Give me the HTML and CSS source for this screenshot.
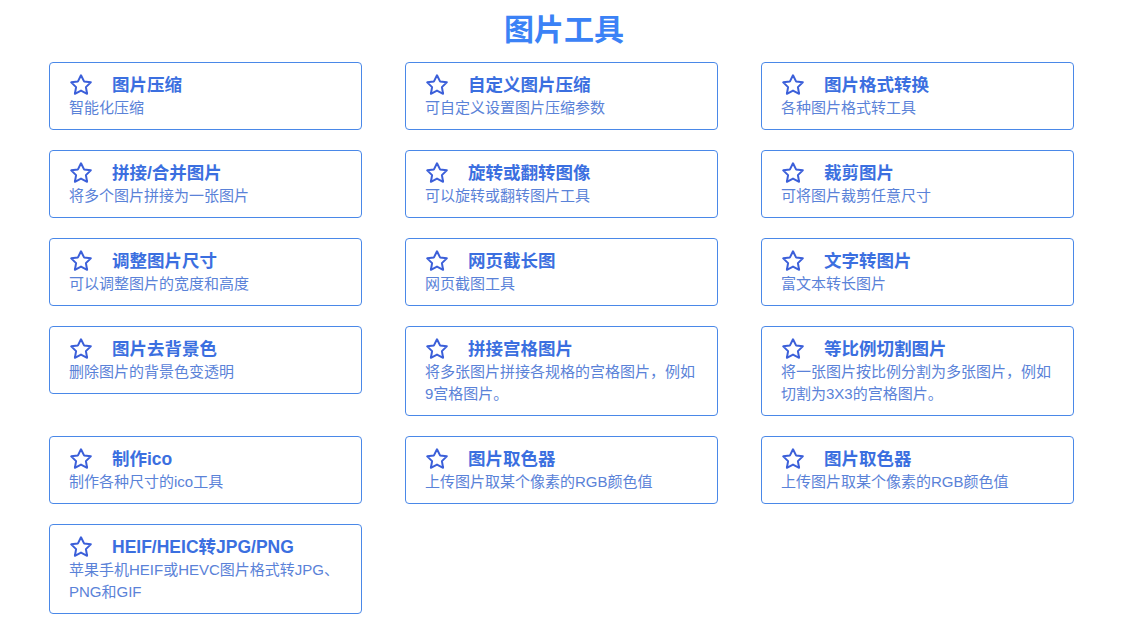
FILE: index.html
```html
<!DOCTYPE html>
<html lang="zh">
<head>
<meta charset="utf-8">
<title>图片工具</title>
<link rel="stylesheet" href="styles.css">
</head>
<body>
<h1 class="page-title">图片工具</h1>
<div class="grid">
  <div class="card"><div class="head"><svg class="star" viewBox="0 0 24 24"><path d="M12 2.3l3.05 6.1 6.75.95-4.9 4.75 1.2 6.7L12 17.6l-6.1 3.2 1.2-6.7-4.9-4.75 6.75-.95z"/></svg><span class="name">图片压缩</span></div><p class="desc">智能化压缩</p></div>
  <div class="card"><div class="head"><svg class="star" viewBox="0 0 24 24"><path d="M12 2.3l3.05 6.1 6.75.95-4.9 4.75 1.2 6.7L12 17.6l-6.1 3.2 1.2-6.7-4.9-4.75 6.75-.95z"/></svg><span class="name">自定义图片压缩</span></div><p class="desc">可自定义设置图片压缩参数</p></div>
  <div class="card"><div class="head"><svg class="star" viewBox="0 0 24 24"><path d="M12 2.3l3.05 6.1 6.75.95-4.9 4.75 1.2 6.7L12 17.6l-6.1 3.2 1.2-6.7-4.9-4.75 6.75-.95z"/></svg><span class="name">图片格式转换</span></div><p class="desc">各种图片格式转工具</p></div>

  <div class="card"><div class="head"><svg class="star" viewBox="0 0 24 24"><path d="M12 2.3l3.05 6.1 6.75.95-4.9 4.75 1.2 6.7L12 17.6l-6.1 3.2 1.2-6.7-4.9-4.75 6.75-.95z"/></svg><span class="name">拼接/合并图片</span></div><p class="desc">将多个图片拼接为一张图片</p></div>
  <div class="card"><div class="head"><svg class="star" viewBox="0 0 24 24"><path d="M12 2.3l3.05 6.1 6.75.95-4.9 4.75 1.2 6.7L12 17.6l-6.1 3.2 1.2-6.7-4.9-4.75 6.75-.95z"/></svg><span class="name">旋转或翻转图像</span></div><p class="desc">可以旋转或翻转图片工具</p></div>
  <div class="card"><div class="head"><svg class="star" viewBox="0 0 24 24"><path d="M12 2.3l3.05 6.1 6.75.95-4.9 4.75 1.2 6.7L12 17.6l-6.1 3.2 1.2-6.7-4.9-4.75 6.75-.95z"/></svg><span class="name">裁剪图片</span></div><p class="desc">可将图片裁剪任意尺寸</p></div>

  <div class="card"><div class="head"><svg class="star" viewBox="0 0 24 24"><path d="M12 2.3l3.05 6.1 6.75.95-4.9 4.75 1.2 6.7L12 17.6l-6.1 3.2 1.2-6.7-4.9-4.75 6.75-.95z"/></svg><span class="name">调整图片尺寸</span></div><p class="desc">可以调整图片的宽度和高度</p></div>
  <div class="card"><div class="head"><svg class="star" viewBox="0 0 24 24"><path d="M12 2.3l3.05 6.1 6.75.95-4.9 4.75 1.2 6.7L12 17.6l-6.1 3.2 1.2-6.7-4.9-4.75 6.75-.95z"/></svg><span class="name">网页截长图</span></div><p class="desc">网页截图工具</p></div>
  <div class="card"><div class="head"><svg class="star" viewBox="0 0 24 24"><path d="M12 2.3l3.05 6.1 6.75.95-4.9 4.75 1.2 6.7L12 17.6l-6.1 3.2 1.2-6.7-4.9-4.75 6.75-.95z"/></svg><span class="name">文字转图片</span></div><p class="desc">富文本转长图片</p></div>

  <div class="card"><div class="head"><svg class="star" viewBox="0 0 24 24"><path d="M12 2.3l3.05 6.1 6.75.95-4.9 4.75 1.2 6.7L12 17.6l-6.1 3.2 1.2-6.7-4.9-4.75 6.75-.95z"/></svg><span class="name">图片去背景色</span></div><p class="desc">删除图片的背景色变透明</p></div>
  <div class="card"><div class="head"><svg class="star" viewBox="0 0 24 24"><path d="M12 2.3l3.05 6.1 6.75.95-4.9 4.75 1.2 6.7L12 17.6l-6.1 3.2 1.2-6.7-4.9-4.75 6.75-.95z"/></svg><span class="name">拼接宫格图片</span></div><p class="desc">将多张图片拼接各规格的宫格图片，例如9宫格图片。</p></div>
  <div class="card"><div class="head"><svg class="star" viewBox="0 0 24 24"><path d="M12 2.3l3.05 6.1 6.75.95-4.9 4.75 1.2 6.7L12 17.6l-6.1 3.2 1.2-6.7-4.9-4.75 6.75-.95z"/></svg><span class="name">等比例切割图片</span></div><p class="desc">将一张图片按比例分割为多张图片，例如切割为3X3的宫格图片。</p></div>

  <div class="card"><div class="head"><svg class="star" viewBox="0 0 24 24"><path d="M12 2.3l3.05 6.1 6.75.95-4.9 4.75 1.2 6.7L12 17.6l-6.1 3.2 1.2-6.7-4.9-4.75 6.75-.95z"/></svg><span class="name">制作ico</span></div><p class="desc">制作各种尺寸的ico工具</p></div>
  <div class="card"><div class="head"><svg class="star" viewBox="0 0 24 24"><path d="M12 2.3l3.05 6.1 6.75.95-4.9 4.75 1.2 6.7L12 17.6l-6.1 3.2 1.2-6.7-4.9-4.75 6.75-.95z"/></svg><span class="name">图片取色器</span></div><p class="desc">上传图片取某个像素的RGB颜色值</p></div>
  <div class="card"><div class="head"><svg class="star" viewBox="0 0 24 24"><path d="M12 2.3l3.05 6.1 6.75.95-4.9 4.75 1.2 6.7L12 17.6l-6.1 3.2 1.2-6.7-4.9-4.75 6.75-.95z"/></svg><span class="name">图片取色器</span></div><p class="desc">上传图片取某个像素的RGB颜色值</p></div>

  <div class="card"><div class="head"><svg class="star" viewBox="0 0 24 24"><path d="M12 2.3l3.05 6.1 6.75.95-4.9 4.75 1.2 6.7L12 17.6l-6.1 3.2 1.2-6.7-4.9-4.75 6.75-.95z"/></svg><span class="name">HEIF/HEIC转JPG/PNG</span></div><p class="desc">苹果手机HEIF或HEVC图片格式转JPG、PNG和GIF</p></div>
</div>
</body>
</html>
```

FILE: styles.css
```css
* { box-sizing: border-box; }
html, body { margin: 0; padding: 0; background: #ffffff; }
body {
  font-family: "Liberation Sans", "Noto Sans CJK SC", sans-serif;
  color: #3b82f6;
}
.page-title {
  margin: 15px 0 17px;
  font-size: 30px;
  line-height: 30px;
  font-weight: 700;
  text-align: center;
  color: #3b82f6;
}
.grid {
  display: grid;
  grid-template-columns: repeat(3, 313px);
  column-gap: 43px;
  row-gap: 20px;
  padding-left: 49px;
  align-items: start;
}
.card {
  border: 1px solid #4a88e8;
  border-radius: 4px;
  padding: 10px 20px 10px 19px;
  min-height: 68px;
}
.head {
  display: flex;
  align-items: center;
  height: 24px;
}
.star {
  width: 24px;
  height: 24px;
  fill: none;
  stroke: #3b5fd9;
  stroke-width: 2;
  stroke-linejoin: round;
  flex: none;
}
.name {
  margin-left: 19px;
  font-size: 17.5px;
  line-height: 18px;
  font-weight: 700;
  color: #3b6fe0;
  white-space: nowrap;
}
.desc {
  margin: 0;
  font-size: 15px;
  line-height: 22px;
  color: #5a82d8;
}
```
